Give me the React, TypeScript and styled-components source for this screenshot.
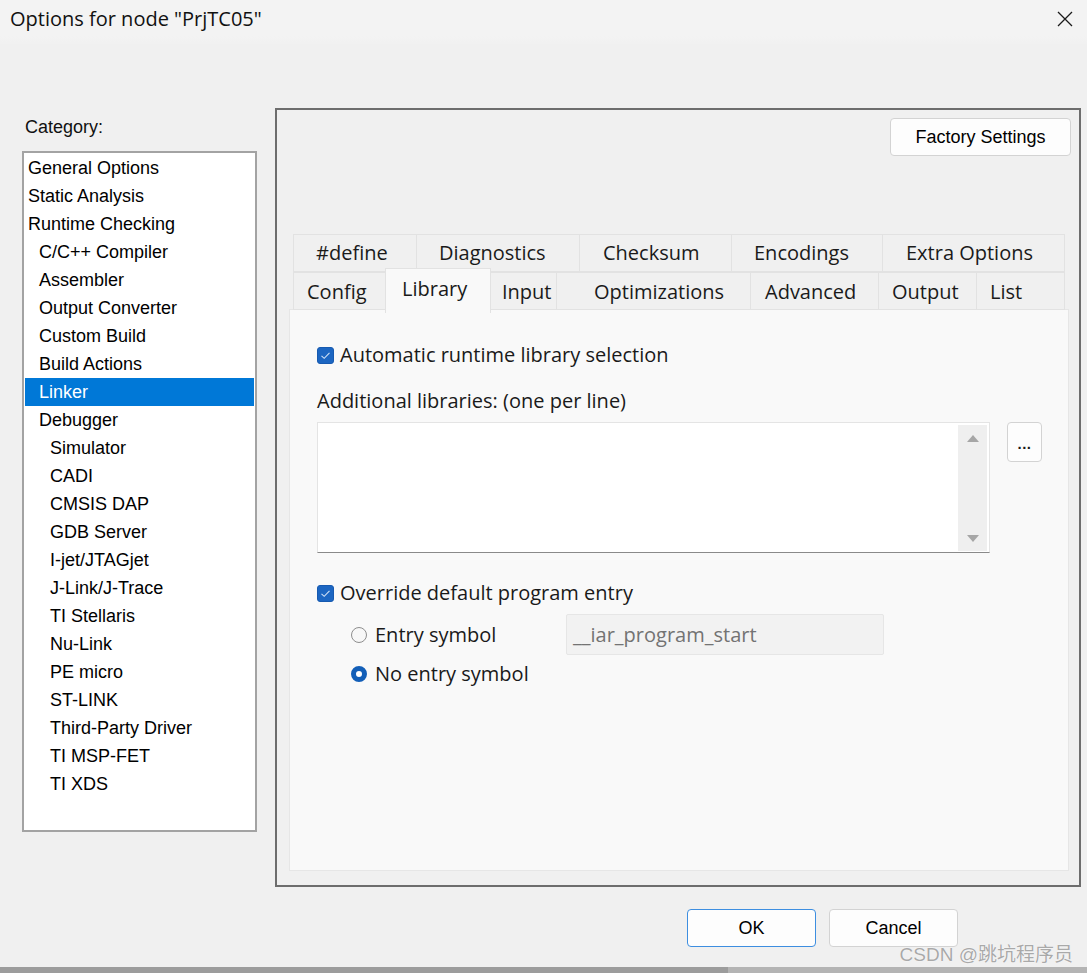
import React from "react";
import styled, { createGlobalStyle } from "styled-components";

const Global = createGlobalStyle`
  html, body { margin: 0; padding: 0; background: #f0f0f0; }
  body { width: 1087px; height: 973px; overflow: hidden; }
  * { box-sizing: border-box; }
`;

const Window = styled.div`
  position: relative;
  width: 1087px;
  height: 973px;
  display: flex;
  flex-direction: column;
  background: #f0f0f0;
  font-family: "Open Sans", "Noto Sans", sans-serif;
  color: #1a1a1a;
`;

const TitleBar = styled.div`
  flex: none;
  height: 44px;
  display: flex;
  align-items: center;
  justify-content: space-between;
  padding: 0 14px 6px 10px;
  background: linear-gradient(#f3f3f3 0, #f3f3f3 36px, #f0f0f0 46px);
`;

const Title = styled.h1`
  margin: 0;
  font-family: "Open Sans", sans-serif;
  font-weight: 400;
  font-size: 20px;
  line-height: 28px;
  color: #111;
`;

const CloseBtn = styled.div`
  width: 16px;
  height: 16px;
  display: flex;
`;

const Main = styled.div`
  flex: none;
  display: flex;
  gap: 18px;
  padding: 64px 6px 0 22px;
`;

const LeftCol = styled.div`
  width: 235px;
  display: flex;
  flex-direction: column;
`;

const PixelLabel = styled.div`
  font-family: "Liberation Sans", Arial, sans-serif;
  font-size: 18px;
  line-height: 20px;
  color: #111;
  margin: 9px 0 0 3px;
`;

const ListBox = styled.div`
  margin-top: 14px;
  height: 681px;
  border: 2px solid #a3a3a3;
  background: #fff;
  padding: 1px;
  display: flex;
  flex-direction: column;
`;

const ListItem = styled.div<{ $level: number; $selected?: boolean }>`
  height: 28px;
  line-height: 28px;
  padding-left: ${(p) => 3 + p.$level * 11}px;
  font-family: "Liberation Sans", Arial, sans-serif;
  font-size: 18px;
  white-space: nowrap;
  color: ${(p) => (p.$selected ? "#fff" : "#000")};
  background: ${(p) => (p.$selected ? "#0078d7" : "transparent")};
`;

const Panel = styled.div`
  width: 806px;
  height: 779px;
  border: 2px solid #6d6d6d;
  display: flex;
  flex-direction: column;
`;

const PlainButton = styled.div<{ $w: number; $default?: boolean }>`
  width: ${(p) => p.$w}px;
  height: 38px;
  display: flex;
  align-items: center;
  justify-content: center;
  background: #fdfdfd;
  border: 1px solid ${(p) => (p.$default ? "#3d8ee0" : "#d3d3d3")};
  border-radius: 4px;
  font-family: "Liberation Sans", Arial, sans-serif;
  font-size: 18px;
  color: #000;
`;

const FactoryWrap = styled.div`
  align-self: flex-end;
  margin: 8px 8px 0 0;
`;

const TabStrip = styled.div`
  margin: 78px 0 0 16px;
  width: 772px;
  display: flex;
  flex-direction: column;
  position: relative;
  z-index: 2;
`;

const TabRow = styled.div`
  display: flex;
  height: 38px;
`;

const Tab = styled.div<{ $selected?: boolean; $back?: boolean; $w: number; $pad: number }>`
  flex: none;
  width: ${(p) => p.$w}px;
  height: ${(p) => (p.$selected ? 45 : 38)}px;
  margin-top: ${(p) => (p.$selected ? -4 : 0)}px;
  padding-top: ${(p) => (p.$selected ? 6 : p.$back ? 4 : 5)}px;
  padding-left: ${(p) => p.$pad}px;
  text-align: left;
  font-size: 20px;
  line-height: 28px;
  color: #1a1a1a;
  white-space: nowrap;
  background: ${(p) => (p.$selected ? "#f9f9f9" : "#f0f0f0")};
  border: 1px solid #e2e2e2;
  border-bottom: ${(p) => (p.$selected ? "none" : "1px solid #e2e2e2")};
  margin-left: -1px;
  position: relative;
  z-index: ${(p) => (p.$selected ? 3 : 1)};
  &:first-child { margin-left: 0; }
`;

const Content = styled.div`
  margin: -1px 0 0 12px;
  width: 780px;
  height: 562px;
  background: #f9f9f9;
  border: 1px solid #e6e6e6;
  position: relative;
  z-index: 1;
  padding: 31px 0 0 27px;
  display: flex;
  flex-direction: column;
`;

const Row = styled.div`
  display: flex;
  align-items: center;
  height: 28px;
  gap: 6px;
  font-size: 20px;
  line-height: 28px;
  white-space: nowrap;
`;

const Check = styled.div`
  width: 17px;
  height: 17px;
  border-radius: 3px;
  background: #1c66c2;
  border: 1px solid #175ab0;
  display: flex;
  align-items: center;
  justify-content: center;
`;

const FieldLabel = styled.div`
  margin-top: 18px;
  font-size: 20px;
  line-height: 28px;
`;

const LibRow = styled.div`
  margin-top: 7px;
  display: flex;
  gap: 17px;
  align-items: flex-start;
`;

const TextArea = styled.div`
  width: 673px;
  height: 131px;
  background: #fff;
  border: 1px solid #e4e4e4;
  border-bottom: 1px solid #8a8a8a;
  display: flex;
  justify-content: flex-end;
  padding: 2px 2px 1px 0;
`;

const ScrollTrack = styled.div`
  width: 29px;
  background: #efefef;
  display: flex;
  flex-direction: column;
  justify-content: space-between;
  align-items: center;
  padding: 10px 0 9px;
`;

const Arrow = styled.div<{ $down?: boolean }>`
  width: 0;
  height: 0;
  border-left: 6px solid transparent;
  border-right: 6px solid transparent;
  ${(p) => (p.$down ? "border-top: 7px solid #a6a6a6;" : "border-bottom: 7px solid #a6a6a6;")}
`;

const DotsButton = styled.div`
  width: 35px;
  height: 40px;
  background: #fdfdfd;
  border: 1px solid #d3d3d3;
  border-radius: 4px;
  display: flex;
  justify-content: center;
  padding-top: 13px;
  font-family: "Liberation Sans", Arial, sans-serif;
  font-weight: 700;
  font-size: 15px;
  line-height: 15px;
  letter-spacing: 0.5px;
  color: #1a1a1a;
`;

const OverrideRow = styled(Row)`
  margin-top: 26px;
`;

const RadioGroup = styled.div`
  margin: 7px 0 0 34px;
  display: flex;
  flex-direction: column;
  gap: 5px;
`;

const RadioRow = styled.div<{ $h: number }>`
  display: flex;
  align-items: center;
  height: ${(p) => p.$h}px;
  font-size: 20px;
  line-height: 28px;
  white-space: nowrap;
`;

const RadioLabel = styled.div<{ $w?: number }>`
  display: flex;
  align-items: center;
  gap: 8px;
  width: ${(p) => (p.$w ? `${p.$w}px` : "auto")};
`;

const Radio = styled.div<{ $on?: boolean }>`
  width: 16px;
  height: 16px;
  border-radius: 50%;
  flex: none;
  ${(p) =>
    p.$on
      ? "background: #ffffff; border: 5px solid #135fb8;"
      : "background: #f7f7f7; border: 1px solid #8e8e8e;"}
`;

const SymbolInput = styled.div`
  width: 318px;
  height: 41px;
  background: #f2f2f2;
  border: 1px solid #e6e6e6;
  border-radius: 2px;
  padding: 0 6px;
  display: flex;
  align-items: center;
  font-size: 20px;
  color: #737373;
`;

const Footer = styled.div`
  flex: none;
  margin-top: 22px;
  display: flex;
  justify-content: flex-end;
  gap: 13px;
  padding-right: 129px;
`;

const Spacer = styled.div`
  flex: 1;
`;

const BottomEdge = styled.div`
  flex: none;
  height: 6px;
  background: linear-gradient(90deg, #9c9c9c 0, #9c9c9c 728px, #b4b4b4 728px, #b4b4b4 100%);
`;

const Watermark = styled.div`
  position: absolute;
  right: 14px;
  bottom: 6px;
  font-family: "Liberation Sans", "Noto Sans CJK SC", sans-serif;
  font-size: 19px;
  line-height: 24px;
  color: #a9a9a9;
  text-shadow: 0 0 1px #fff, 0 0 1px #fff;
`;

const categories: [string, number][] = [
  ["General Options", 0],
  ["Static Analysis", 0],
  ["Runtime Checking", 0],
  ["C/C++ Compiler", 1],
  ["Assembler", 1],
  ["Output Converter", 1],
  ["Custom Build", 1],
  ["Build Actions", 1],
  ["Linker", 1],
  ["Debugger", 1],
  ["Simulator", 2],
  ["CADI", 2],
  ["CMSIS DAP", 2],
  ["GDB Server", 2],
  ["I-jet/JTAGjet", 2],
  ["J-Link/J-Trace", 2],
  ["TI Stellaris", 2],
  ["Nu-Link", 2],
  ["PE micro", 2],
  ["ST-LINK", 2],
  ["Third-Party Driver", 2],
  ["TI MSP-FET", 2],
  ["TI XDS", 2],
];

const backTabs: [string, number, number][] = [
  ["#define", 124, 22],
  ["Diagnostics", 164, 22],
  ["Checksum", 153, 23],
  ["Encodings", 152, 22],
  ["Extra Options", 183, 23],
];

const frontTabs: [string, number, number][] = [
  ["Config", 93, 13],
  ["Library", 106, 16],
  ["Input", 67, 11],
  ["Optimizations", 195, 37],
  ["Advanced", 129, 14],
  ["Output", 99, 13],
  ["List", 89, 13],
];

const CheckMark = () => (
  <svg width="11" height="9" viewBox="0 0 11 9">
    <path d="M1.5 4.8 L4.2 7.3 L9.5 1.8" fill="none" stroke="#cfe0f6" strokeWidth="1.1" />
  </svg>
);

export default function App() {
  return (
    <Window>
      <Global />
      <TitleBar>
        <Title>Options for node "PrjTC05"</Title>
        <CloseBtn>
          <svg width="16" height="16" viewBox="0 0 16 16">
            <path d="M1 1 L15 15 M15 1 L1 15" stroke="#1a1a1a" strokeWidth="1.3" />
          </svg>
        </CloseBtn>
      </TitleBar>
      <Main>
        <LeftCol>
          <PixelLabel>Category:</PixelLabel>
          <ListBox>
            {categories.map(([name, level]) => (
              <ListItem key={name} $level={level} $selected={name === "Linker"}>
                {name}
              </ListItem>
            ))}
          </ListBox>
        </LeftCol>
        <Panel>
          <FactoryWrap>
            <PlainButton $w={181}>Factory Settings</PlainButton>
          </FactoryWrap>
          <TabStrip>
            <TabRow>
              {backTabs.map(([t, w, pad]) => (
                <Tab key={t} $back $w={w} $pad={pad}>
                  {t}
                </Tab>
              ))}
            </TabRow>
            <TabRow>
              {frontTabs.map(([t, w, pad]) => (
                <Tab key={t} $selected={t === "Library"} $w={w} $pad={pad}>
                  {t}
                </Tab>
              ))}
            </TabRow>
          </TabStrip>
          <Content>
            <Row>
              <Check>
                <CheckMark />
              </Check>
              Automatic runtime library selection
            </Row>
            <FieldLabel>Additional libraries: (one per line)</FieldLabel>
            <LibRow>
              <TextArea>
                <ScrollTrack>
                  <Arrow />
                  <Arrow $down />
                </ScrollTrack>
              </TextArea>
              <DotsButton>...</DotsButton>
            </LibRow>
            <OverrideRow>
              <Check>
                <CheckMark />
              </Check>
              Override default program entry
            </OverrideRow>
            <RadioGroup>
              <RadioRow $h={41}>
                <RadioLabel $w={215}>
                  <Radio />
                  Entry symbol
                </RadioLabel>
                <SymbolInput>__iar_program_start</SymbolInput>
              </RadioRow>
              <RadioRow $h={28}>
                <RadioLabel>
                  <Radio $on />
                  No entry symbol
                </RadioLabel>
              </RadioRow>
            </RadioGroup>
          </Content>
        </Panel>
      </Main>
      <Footer>
        <PlainButton $w={129} $default>
          OK
        </PlainButton>
        <PlainButton $w={129}>Cancel</PlainButton>
      </Footer>
      <Spacer />
      <BottomEdge />
      <Watermark>CSDN @跳坑程序员</Watermark>
    </Window>
  );
}
